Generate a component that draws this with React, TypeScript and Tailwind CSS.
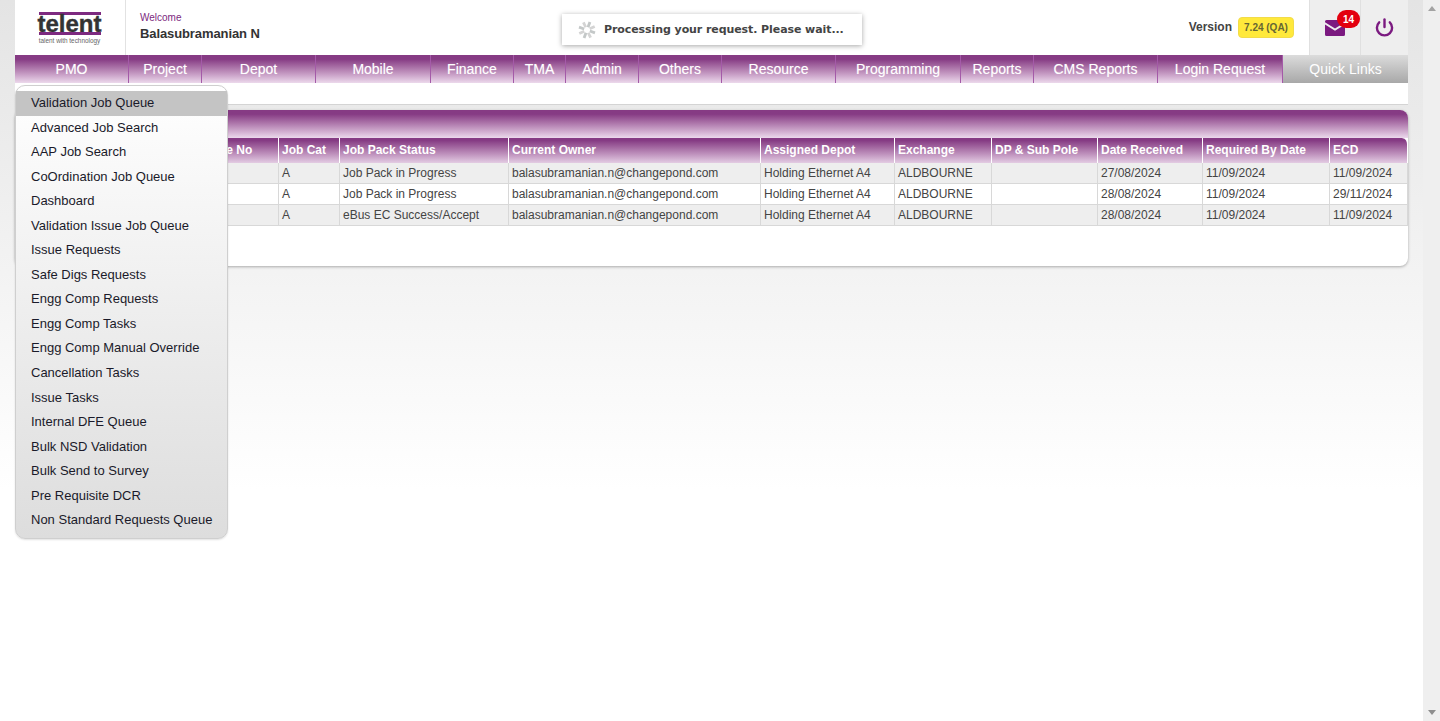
import React from "react";

const navItems = [
  { label: "PMO", w: "w-[114px]" },
  { label: "Project", w: "w-[73px]" },
  { label: "Depot", w: "w-[114px]" },
  { label: "Mobile", w: "w-[115px]" },
  { label: "Finance", w: "w-[83px]" },
  { label: "TMA", w: "w-[52px]" },
  { label: "Admin", w: "w-[73px]" },
  { label: "Others", w: "w-[83px]" },
  { label: "Resource", w: "w-[114px]" },
  { label: "Programming", w: "w-[125px]" },
  { label: "Reports", w: "w-[73px]" },
  { label: "CMS Reports", w: "w-[124px]" },
  { label: "Login Request", w: "w-[125px]" },
];

const menuItems = [
  "Validation Job Queue",
  "Advanced Job Search",
  "AAP Job Search",
  "CoOrdination Job Queue",
  "Dashboard",
  "Validation Issue Job Queue",
  "Issue Requests",
  "Safe Digs Requests",
  "Engg Comp Requests",
  "Engg Comp Tasks",
  "Engg Comp Manual Override",
  "Cancellation Tasks",
  "Issue Tasks",
  "Internal DFE Queue",
  "Bulk NSD Validation",
  "Bulk Send to Survey",
  "Pre Requisite DCR",
  "Non Standard Requests Queue",
];

// first column sits fully behind the open menu, so it has no visible label
const columns = [
  { label: "", w: "w-[157px]" },
  { label: "Reference No", w: "w-[107px]" },
  { label: "Job Cat", w: "w-[61px]" },
  { label: "Job Pack Status", w: "w-[169px]" },
  { label: "Current Owner", w: "w-[252px]" },
  { label: "Assigned Depot", w: "w-[134px]" },
  { label: "Exchange", w: "w-[97px]" },
  { label: "DP & Sub Pole", w: "w-[106px]" },
  { label: "Date Received", w: "w-[105px]" },
  { label: "Required By Date", w: "w-[127px]" },
  { label: "ECD", w: "flex-1" },
];

const rows = [
  ["", "", "A", "Job Pack in Progress", "balasubramanian.n@changepond.com", "Holding Ethernet A4", "ALDBOURNE", "", "27/08/2024", "11/09/2024", "11/09/2024"],
  ["", "", "A", "Job Pack in Progress", "balasubramanian.n@changepond.com", "Holding Ethernet A4", "ALDBOURNE", "", "28/08/2024", "11/09/2024", "29/11/2024"],
  ["", "", "A", "eBus EC Success/Accept", "balasubramanian.n@changepond.com", "Holding Ethernet A4", "ALDBOURNE", "", "28/08/2024", "11/09/2024", "11/09/2024"],
];

const Spinner = () => (
  <svg width="18" height="18" viewBox="0 0 18 18" className="shrink-0">
    {[0, 45, 90, 135, 180, 225, 270, 315].map((deg, i) => (
      <rect
        key={deg}
        x="7.6"
        y="0.5"
        width="2.8"
        height="5.5"
        fill={i % 2 ? "#d4d4d4" : "#c4c8c8"}
        transform={`rotate(${deg + 20} 9 9)`}
      />
    ))}
  </svg>
);

export default function App() {
  return (
    <div className="relative flex h-[721px] w-[1440px] overflow-hidden bg-white font-['Liberation_Sans',Arial,sans-serif]">
      <div className="flex h-full w-[1423px] flex-col bg-gradient-to-b from-[#e4e4e4] from-0% via-[#f2f2f2] via-[35%] to-white to-[68%] px-[15px]">
        <header className="flex h-[55px] w-full bg-white">
          <div className="flex w-[111px] flex-col items-center pt-[12px] border-r border-[#e2e2e2] pr-[1px]">
            <div className="h-[3px] w-[62px] bg-[#7d2a80]" />
            <div className="h-[17px] text-[24px] leading-[17px] font-bold text-[#333333] [-webkit-text-stroke:0.4px_#333333]">
              telent
            </div>
            <div className="h-[3px] w-[62px] bg-[#7d2a80]" />
            <div className="mt-[1px] text-[6.4px] leading-[10px] text-[#666666]">talent with technology</div>
          </div>
          <div className="flex flex-col pt-[12px] pl-[14px]">
            <span className="text-[10px] leading-[12px] text-[#7d2a80]">Welcome</span>
            <span className="mt-[1px] text-[13px] leading-[18px] font-bold tracking-[-0.1px] text-[#333333]">Balasubramanian N</span>
          </div>
          <div className="ml-auto flex items-center pb-[1px]">
            <span className="text-[12px] font-bold text-[#444444]">Version</span>
            <span className="ml-[6px] flex h-[21px] w-[56px] items-center justify-center rounded-[4px] border border-[#f2dc4a] bg-[#ffe93b] text-[10px] font-bold text-[#666633]">
              7.24 (QA)
            </span>
          </div>
          <div className="relative ml-[15px] flex w-[52px] items-center justify-center border-x border-[#e0e0e0] bg-[#eeeeee]">
            <svg width="20" height="16" viewBox="0 0 20 16" className="mt-[1px] mr-[1px]">
              <path d="M1.5 0h17A1.5 1.5 0 0 1 20 1.5v.8L10 8.6 0 2.3v-.8A1.5 1.5 0 0 1 1.5 0z" fill="#7b1a80" />
              <path d="M0 4.4l10 6.3 10-6.3v10.1a1.5 1.5 0 0 1-1.500 1.500h-17A1.500 1.500 0 0 1 0 14.500z" fill="#7b1a80" />
            </svg>
            <span className="absolute top-[10px] right-0 flex h-[18px] w-[23px] items-center justify-center rounded-full bg-[#e3000f] text-[10px] font-bold text-white">
              14
            </span>
          </div>
          <div className="flex w-[47px] items-center justify-center bg-[#eeeeee]">
            <svg width="19" height="19" viewBox="0 0 19 19" fill="none" stroke="#7b1a80" strokeWidth="2.4" strokeLinecap="round">
              <path d="M9.5 1.500v7.500" />
              <path d="M14.800 4.300a7.600 7.600 0 1 1-10.600 0" />
            </svg>
          </div>
        </header>

        <nav className="flex h-[28px] w-full">
          {navItems.map((item) => (
            <div
              key={item.label}
              className={`${item.w} flex items-center justify-center border-r border-[#a45aa8] bg-gradient-to-b from-[#863b84] from-15% to-[#ecd9ec] text-[14px] text-white [text-shadow:0_0_1px_rgba(255,255,255,0.4)]`}
            >
              {item.label}
            </div>
          ))}
          <div className="flex flex-1 items-center justify-center bg-gradient-to-b from-[#dcdcdc] to-[#a8a8a8] text-[14px] text-white">
            Quick Links
          </div>
        </nav>

        <div className="h-[22px] w-full border-b border-[#d4d4d4] bg-white" />

        <section className="mt-[5px] h-[156px] w-full rounded-[8px] bg-white shadow-[0_1px_3px_rgba(0,0,0,0.3)]">
          <div className="h-[28px] rounded-t-[8px] bg-gradient-to-b from-[#863b84] from-15% to-[#ecd9ec]" />
          <div className="flex w-full">
            {columns.map((col, i) => (
              <div key={i} className={col.w}>
                <div className={`flex h-[25px] items-center overflow-hidden border-r border-white bg-gradient-to-b from-[#863b84] from-10% to-[#e3cce3] pb-[2px] pl-[3px] text-[12px] font-bold whitespace-nowrap text-white ${i === columns.length - 1 ? "rounded-tr-[6px]" : ""}`}>
                  {col.label}
                </div>
                {rows.map((row, r) => (
                  <div
                    key={r}
                    className={`flex h-[21px] items-center border-r border-b border-[#d8d8d8] pl-[3px] text-[12px] whitespace-nowrap text-[#444444] ${r % 2 === 0 ? "bg-[#eeeeee]" : "bg-white"}`}
                  >
                    {row[i]}
                  </div>
                ))}
              </div>
            ))}
          </div>
        </section>
      </div>

      {/* page scrollbar */}
      <div className="flex w-[17px] flex-col items-center justify-between bg-[#efefef] py-[6px]">
        <div className="h-0 w-0 border-x-[4px] border-b-[5px] border-x-transparent border-b-[#a3a3a3]" />
        <div className="h-0 w-0 border-x-[4px] border-t-[5px] border-x-transparent border-t-[#8e8e8e]" />
      </div>

      {/* toast */}
      <div className="absolute top-[14px] left-[562px] flex h-[31px] w-[300px] items-center gap-[8px] bg-white pl-[16px] shadow-[0_1px_5px_rgba(0,0,0,0.35)]">
        <Spinner />
        <span className="mt-[1px] font-['DejaVu_Sans',Verdana,sans-serif] text-[11px] font-bold tracking-[-0.08px] whitespace-nowrap text-[#444444]">
          Processing your request. Please wait...
        </span>
      </div>

      {/* quick links menu */}
      <div className="absolute top-[85px] left-[15px] w-[213px] rounded-[10px] border border-[#cfcfcf] bg-gradient-to-b from-white to-[#dddddd] py-[5px] shadow-[0_1px_2px_rgba(0,0,0,0.12)]">
        {menuItems.map((item, i) => (
          <div
            key={item}
            className={`flex h-[24.55px] items-center pb-[1px] pl-[15px] text-[13px] whitespace-nowrap text-[#1a1a2a] ${i === 0 ? "bg-[#c4c4c4]" : ""}`}
          >
            {item}
          </div>
        ))}
      </div>
    </div>
  );
}
